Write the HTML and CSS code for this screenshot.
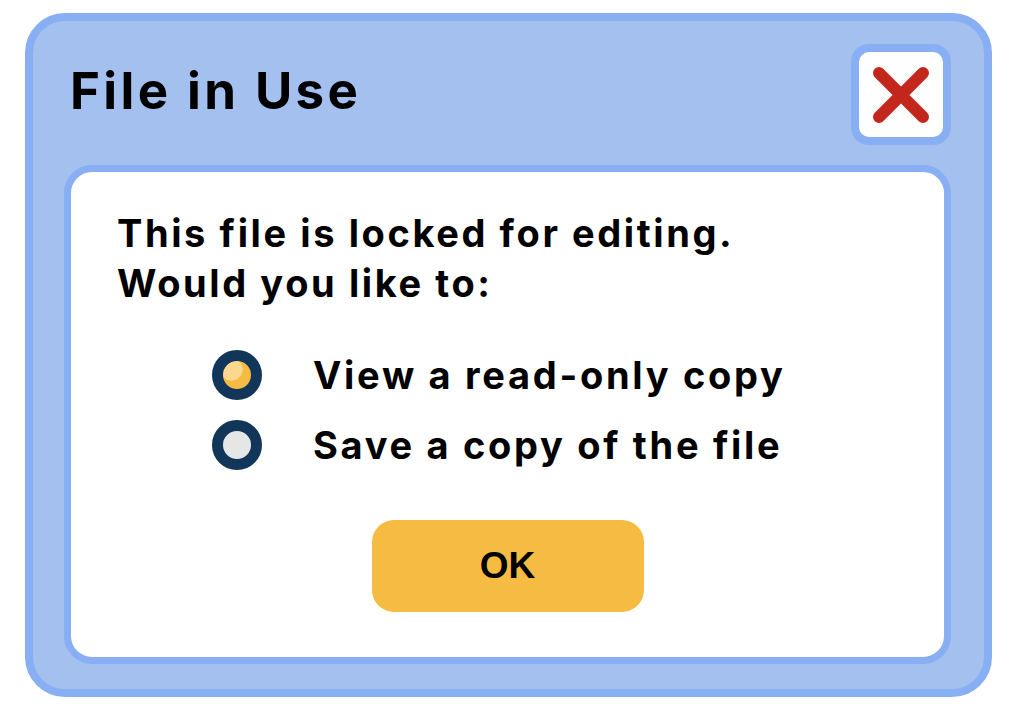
FILE: index.html
```html
<!DOCTYPE html>
<html lang="en">
<head>
  <meta charset="UTF-8">
  <title>File in Use</title>
  <link rel="stylesheet" href="styles.css">
</head>
<body>
  <div class="dialog">
    <div class="dialog-header">
      <h1 class="dialog-title">File in Use</h1>
      <button class="close-btn" aria-label="Close">
        <svg width="56" height="56" viewBox="0 0 56 56">
          <path d="M6 6 L50 50 M50 6 L6 50" stroke="#c3271c" stroke-width="12" stroke-linecap="round" fill="none"/>
        </svg>
      </button>
    </div>

    <div class="dialog-body">
      <p class="message">This file is locked for editing.<br>Would you like to:</p>

      <!-- Choices -->
      <ul class="options">
        <li class="option">
          <span class="radio checked"></span>
          <span class="option-label">View a read-only copy</span>
        </li>
        <li class="option">
          <span class="radio"></span>
          <span class="option-label">Save a copy of the file</span>
        </li>
      </ul>

      <div class="actions">
        <button class="ok-btn">OK</button>
      </div>
    </div>
  </div>
</body>
</html>
```

FILE: styles.css
```css
/* Base */
body {
  margin: 0;
  background: #fff;
  font-family: Inter, "Noto Sans", sans-serif;
}

/* Dialog frame */
.dialog {
  box-sizing: border-box;
  width: 967px;
  height: 684px;
  margin: 13px 0 0 25px;
  background: #a4c0ee;
  border: 8px solid #88aef3;
  border-radius: 40px;
  padding: 23px 33px 25px 31px;
  display: flex;
  flex-direction: column;
  gap: 20px;
}
.dialog-header {
  display: flex;
  align-items: center;
  justify-content: space-between;
}
.dialog-title {
  margin: 0 0 8px 6px;
  font-size: 51px;
  font-weight: 700;
  letter-spacing: 3.4px;
  color: #000;
}
.close-btn {
  box-sizing: border-box;
  width: 100px;
  height: 101px;
  background: #fff;
  border: 8px solid #88aef3;
  border-radius: 18px;
  padding: 0;
  display: flex;
  align-items: center;
  justify-content: center;
  cursor: pointer;
}

/* Body panel */
.dialog-body {
  flex: 1;
  background: #fff;
  border: 7px solid #88aef3;
  border-radius: 28px;
  padding: 36px 46px 0 46px;
  display: flex;
  flex-direction: column;
}
.message {
  margin: 0;
  font-size: 38px;
  font-weight: 700;
  line-height: 50px;
  letter-spacing: 2.6px;
  color: #000;
}

/* Radio options */
.options {
  list-style: none;
  margin: 42px 0 0 95px;
  padding: 0;
  display: flex;
  flex-direction: column;
  gap: 20px;
}
.option {
  display: flex;
  align-items: center;
  gap: 51px;
  height: 50px;
}
.radio {
  box-sizing: border-box;
  width: 50px;
  height: 50px;
  border-radius: 50%;
  border: 11px solid #12355a;
  background: #e6e6e6;
}
.radio.checked {
  background: radial-gradient(circle at 30% 30%, #fcd88e 0 40%, #f5bb42 41%);
}
.option-label {
  font-size: 38px;
  font-weight: 700;
  letter-spacing: 2.7px;
  color: #000;
}

/* Button */
.actions {
  display: flex;
  justify-content: center;
  margin-top: 50px;
}
.ok-btn {
  width: 272px;
  height: 92px;
  border: none;
  border-radius: 22px;
  background: #f5bb42;
  font-family: "Liberation Sans", Arial, sans-serif;
  font-size: 37px;
  font-weight: 700;
  color: #000;
  cursor: pointer;
}
```
